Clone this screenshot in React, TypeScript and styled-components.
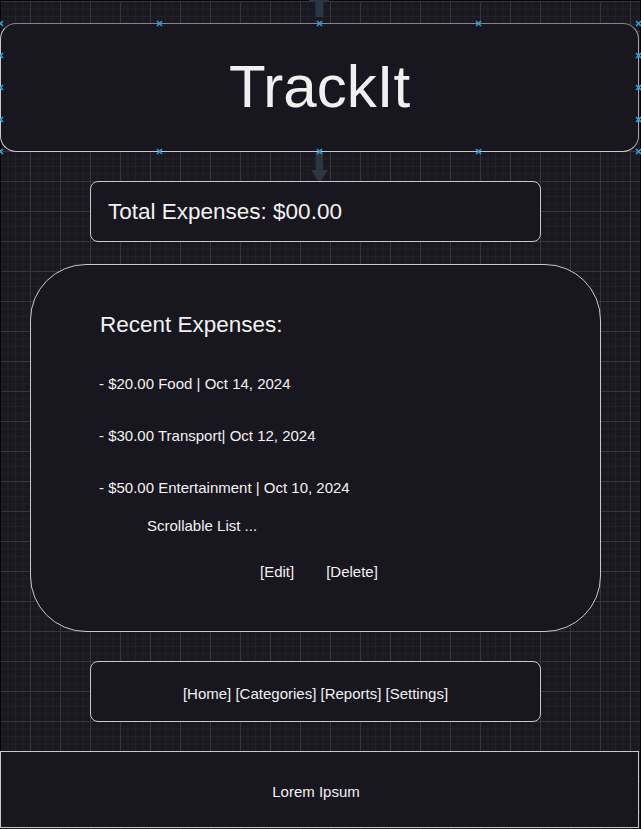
import React from 'react';
import styled, { createGlobalStyle } from 'styled-components';

const GlobalStyle = createGlobalStyle`
  html, body {
    margin: 0;
    padding: 0;
    background: #1a1820;
  }
  * {
    box-sizing: border-box;
  }
`;

const Canvas = styled.div`
  position: relative;
  width: 641px;
  height: 829px;
  overflow: hidden;
  display: flex;
  flex-direction: column;
  align-items: flex-start;
  font-family: 'Liberation Sans', Arial, sans-serif;
  color: #f2f2f2;
  background-color: #1a1820;
  background-image:
    linear-gradient(#36343c 1px, transparent 1px),
    linear-gradient(90deg, #36343c 1px, transparent 1px),
    linear-gradient(#222028 1px, transparent 1px),
    linear-gradient(90deg, #222028 1px, transparent 1px);
  background-size: 30px 30px, 30px 30px, 7.5px 7.5px, 7.5px 7.5px;
  background-position: 0 1px, 0 0, 0 1px, 0 0;
  box-shadow: inset 1px 1px 0 #050507, inset -1px 0 0 #050507;
`;

const Box = styled.div<{ $top: number; $left: number; $width: number; $height: number; $radius: number }>`
  position: relative;
  flex-shrink: 0;
  margin-top: ${(p) => p.$top}px;
  margin-left: ${(p) => p.$left}px;
  width: ${(p) => p.$width}px;
  height: ${(p) => p.$height}px;
  border: 1px solid #c9c9cc;
  border-radius: ${(p) => p.$radius}px;
  background: #18161e;
`;

const HeaderBox = styled(Box)`
  display: flex;
  align-items: center;
  justify-content: center;
  padding-bottom: 3px;
  border-top-color: #85848a;
  border-right-color: #a4a3a8;
`;

const Title = styled.h1`
  margin: 0;
  font-size: 60px;
  font-weight: 400;
  color: #f0f0f0;
`;

const TotalBox = styled(Box)`
  display: flex;
  align-items: center;
  padding-left: 17px;
`;

const TotalText = styled.span`
  font-size: 22.5px;
`;

const RecentBox = styled(Box)`
  display: flex;
  flex-direction: column;
  padding: 47px 0 0 68px;
`;

const Heading = styled.h2`
  margin: 0 0 0 1px;
  font-size: 22.5px;
  font-weight: 400;
  line-height: 25px;
`;

const List = styled.ul`
  list-style: none;
  margin: 37.5px 0 0;
  padding: 0;
  display: flex;
  flex-direction: column;
  gap: 35px;
`;

const Item = styled.li`
  font-size: 15px;
  line-height: 17px;
  height: 17px;
`;

const Hint = styled.div`
  margin: 21.7px 0 0 48px;
  font-size: 15px;
  line-height: 17px;
`;

const Actions = styled.div`
  display: flex;
  gap: 32px;
  margin: 29px 0 0 161px;
  font-size: 15px;
  line-height: 17px;
`;

const NavBox = styled(Box)`
  display: flex;
  align-items: center;
  justify-content: center;
  padding-top: 3px;
  font-size: 15px;
`;

const FooterBox = styled(Box)`
  display: flex;
  align-items: center;
  justify-content: center;
  padding: 3px 7px 0 0;
  font-size: 15px;
`;

const Overlay = styled.svg`
  position: absolute;
  left: 0;
  top: 0;
  pointer-events: none;
  overflow: visible;
`;

const handleXs = [0, 159, 319, 478, 638];
const handleYs = [55, 87, 119];

const Handle: React.FC<{ x: number; y: number }> = ({ x, y }) => (
  <g stroke='#2f9ed8' strokeWidth={1.6}>
    <line x1={x - 2.5} y1={y - 2.5} x2={x + 2.5} y2={y + 2.5} />
    <line x1={x - 2.5} y1={y + 2.5} x2={x + 2.5} y2={y - 2.5} />
  </g>
);

const expenses = [
  '- $20.00 Food | Oct 14, 2024',
  '- $30.00 Transport| Oct 12, 2024',
  '- $50.00 Entertainment | Oct 10, 2024',
];

export default function App() {
  return (
    <>
      <GlobalStyle />
      <Canvas>
        {/* connectors sit behind the boxes */}
        <Overlay width={641} height={829}>
          <g fill='#2a3947' opacity={0.95}>
            <rect x={309} y={0} width={20} height={2} />
            <rect x={315.5} y={0} width={8} height={17} />
            <rect x={316} y={152} width={7} height={18} />
            <polygon points='311,170 328,170 319.5,183' />
          </g>
        </Overlay>

        <HeaderBox $top={23} $left={0} $width={639} $height={129} $radius={16}>
          <Title>TrackIt</Title>
        </HeaderBox>

        <TotalBox $top={29} $left={90} $width={451} $height={61} $radius={8}>
          <TotalText>Total Expenses: $00.00</TotalText>
        </TotalBox>

        <RecentBox $top={22} $left={30} $width={571} $height={368} $radius={56}>
          <Heading>Recent Expenses:</Heading>
          <List>
            {expenses.map((e) => (
              <Item key={e}>{e}</Item>
            ))}
          </List>
          <Hint>Scrollable List ...</Hint>
          <Actions>
            <span>[Edit]</span>
            <span>[Delete]</span>
          </Actions>
        </RecentBox>

        <NavBox $top={29} $left={90} $width={451} $height={61} $radius={8}>
          [Home] [Categories] [Reports] [Settings]
        </NavBox>

        <FooterBox $top={29} $left={0} $width={639} $height={77} $radius={0}>
          Lorem Ipsum
        </FooterBox>

        {/* selection handles of the header shape */}
        <Overlay width={641} height={829}>
          {handleXs.map((x) => (
            <React.Fragment key={x}>
              <Handle x={x + 0.5} y={23.5} />
              <Handle x={x + 0.5} y={151.5} />
            </React.Fragment>
          ))}
          {handleYs.map((y) => (
            <React.Fragment key={y}>
              <Handle x={0.5} y={y + 0.5} />
              <Handle x={638.5} y={y + 0.5} />
            </React.Fragment>
          ))}
        </Overlay>
      </Canvas>
    </>
  );
}
